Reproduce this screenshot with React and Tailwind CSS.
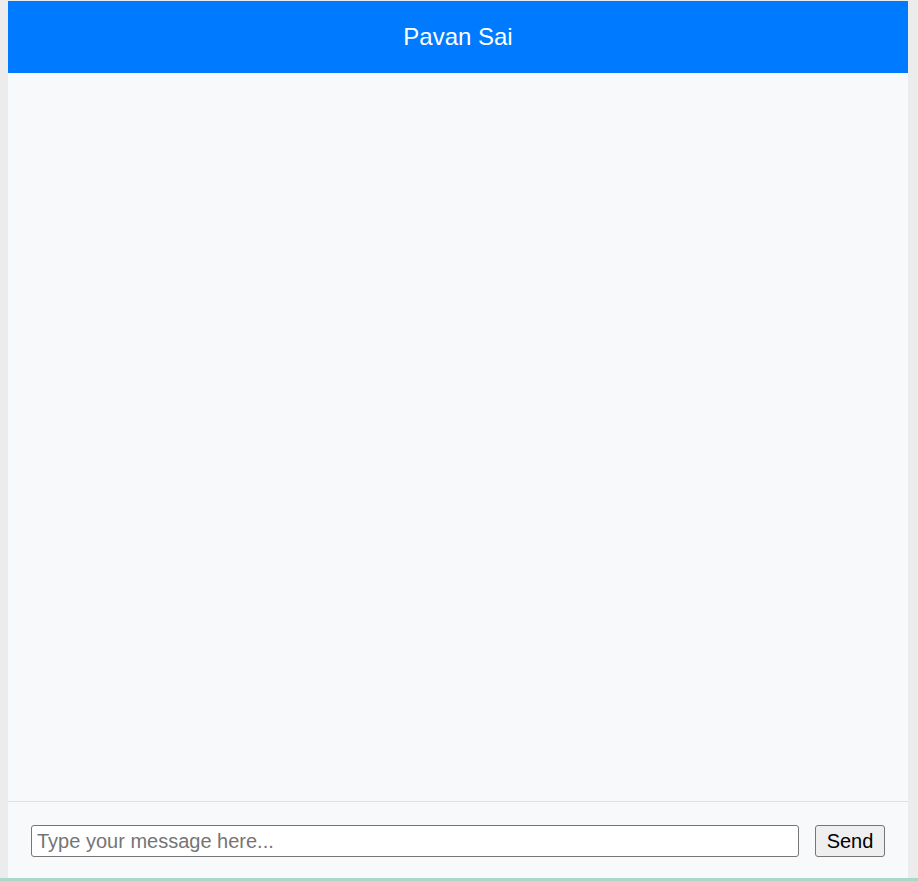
export default function App() {
  return (
    <div
      className="flex h-[881px] w-full flex-col bg-[#ececec]"
      style={{ fontFamily: '"Liberation Sans", Arial, sans-serif' }}
    >
      <div className="flex flex-1 flex-col pl-2 pr-[10px] pt-px">
        <div className="flex flex-1 flex-col bg-[#f8f9fa]">
          {/* Header */}
          <div className="flex h-[72px] items-center justify-center bg-[#007bff] text-[24px] text-white">
            Pavan Sai
          </div>

          {/* Messages */}
          <div className="flex-1" />

          {/* Input bar */}
          <div className="flex h-[77px] items-start gap-4 border-t border-[#dee2e6] px-[23px] pt-[23px]">
            <input
              type="text"
              placeholder="Type your message here..."
              className="h-[32px] flex-1 rounded-[3px] border border-[#767676] bg-white px-[5px] text-[20px] text-black outline-none placeholder:text-[#757575]"
            />
            <button className="h-[32px] w-[70px] rounded-[3px] border border-[#767676] bg-[#efefef] text-[20px] text-black">
              Send
            </button>
          </div>
        </div>
      </div>
      <div className="h-[3px] bg-[#a8d8c8]" />
    </div>
  );
}
